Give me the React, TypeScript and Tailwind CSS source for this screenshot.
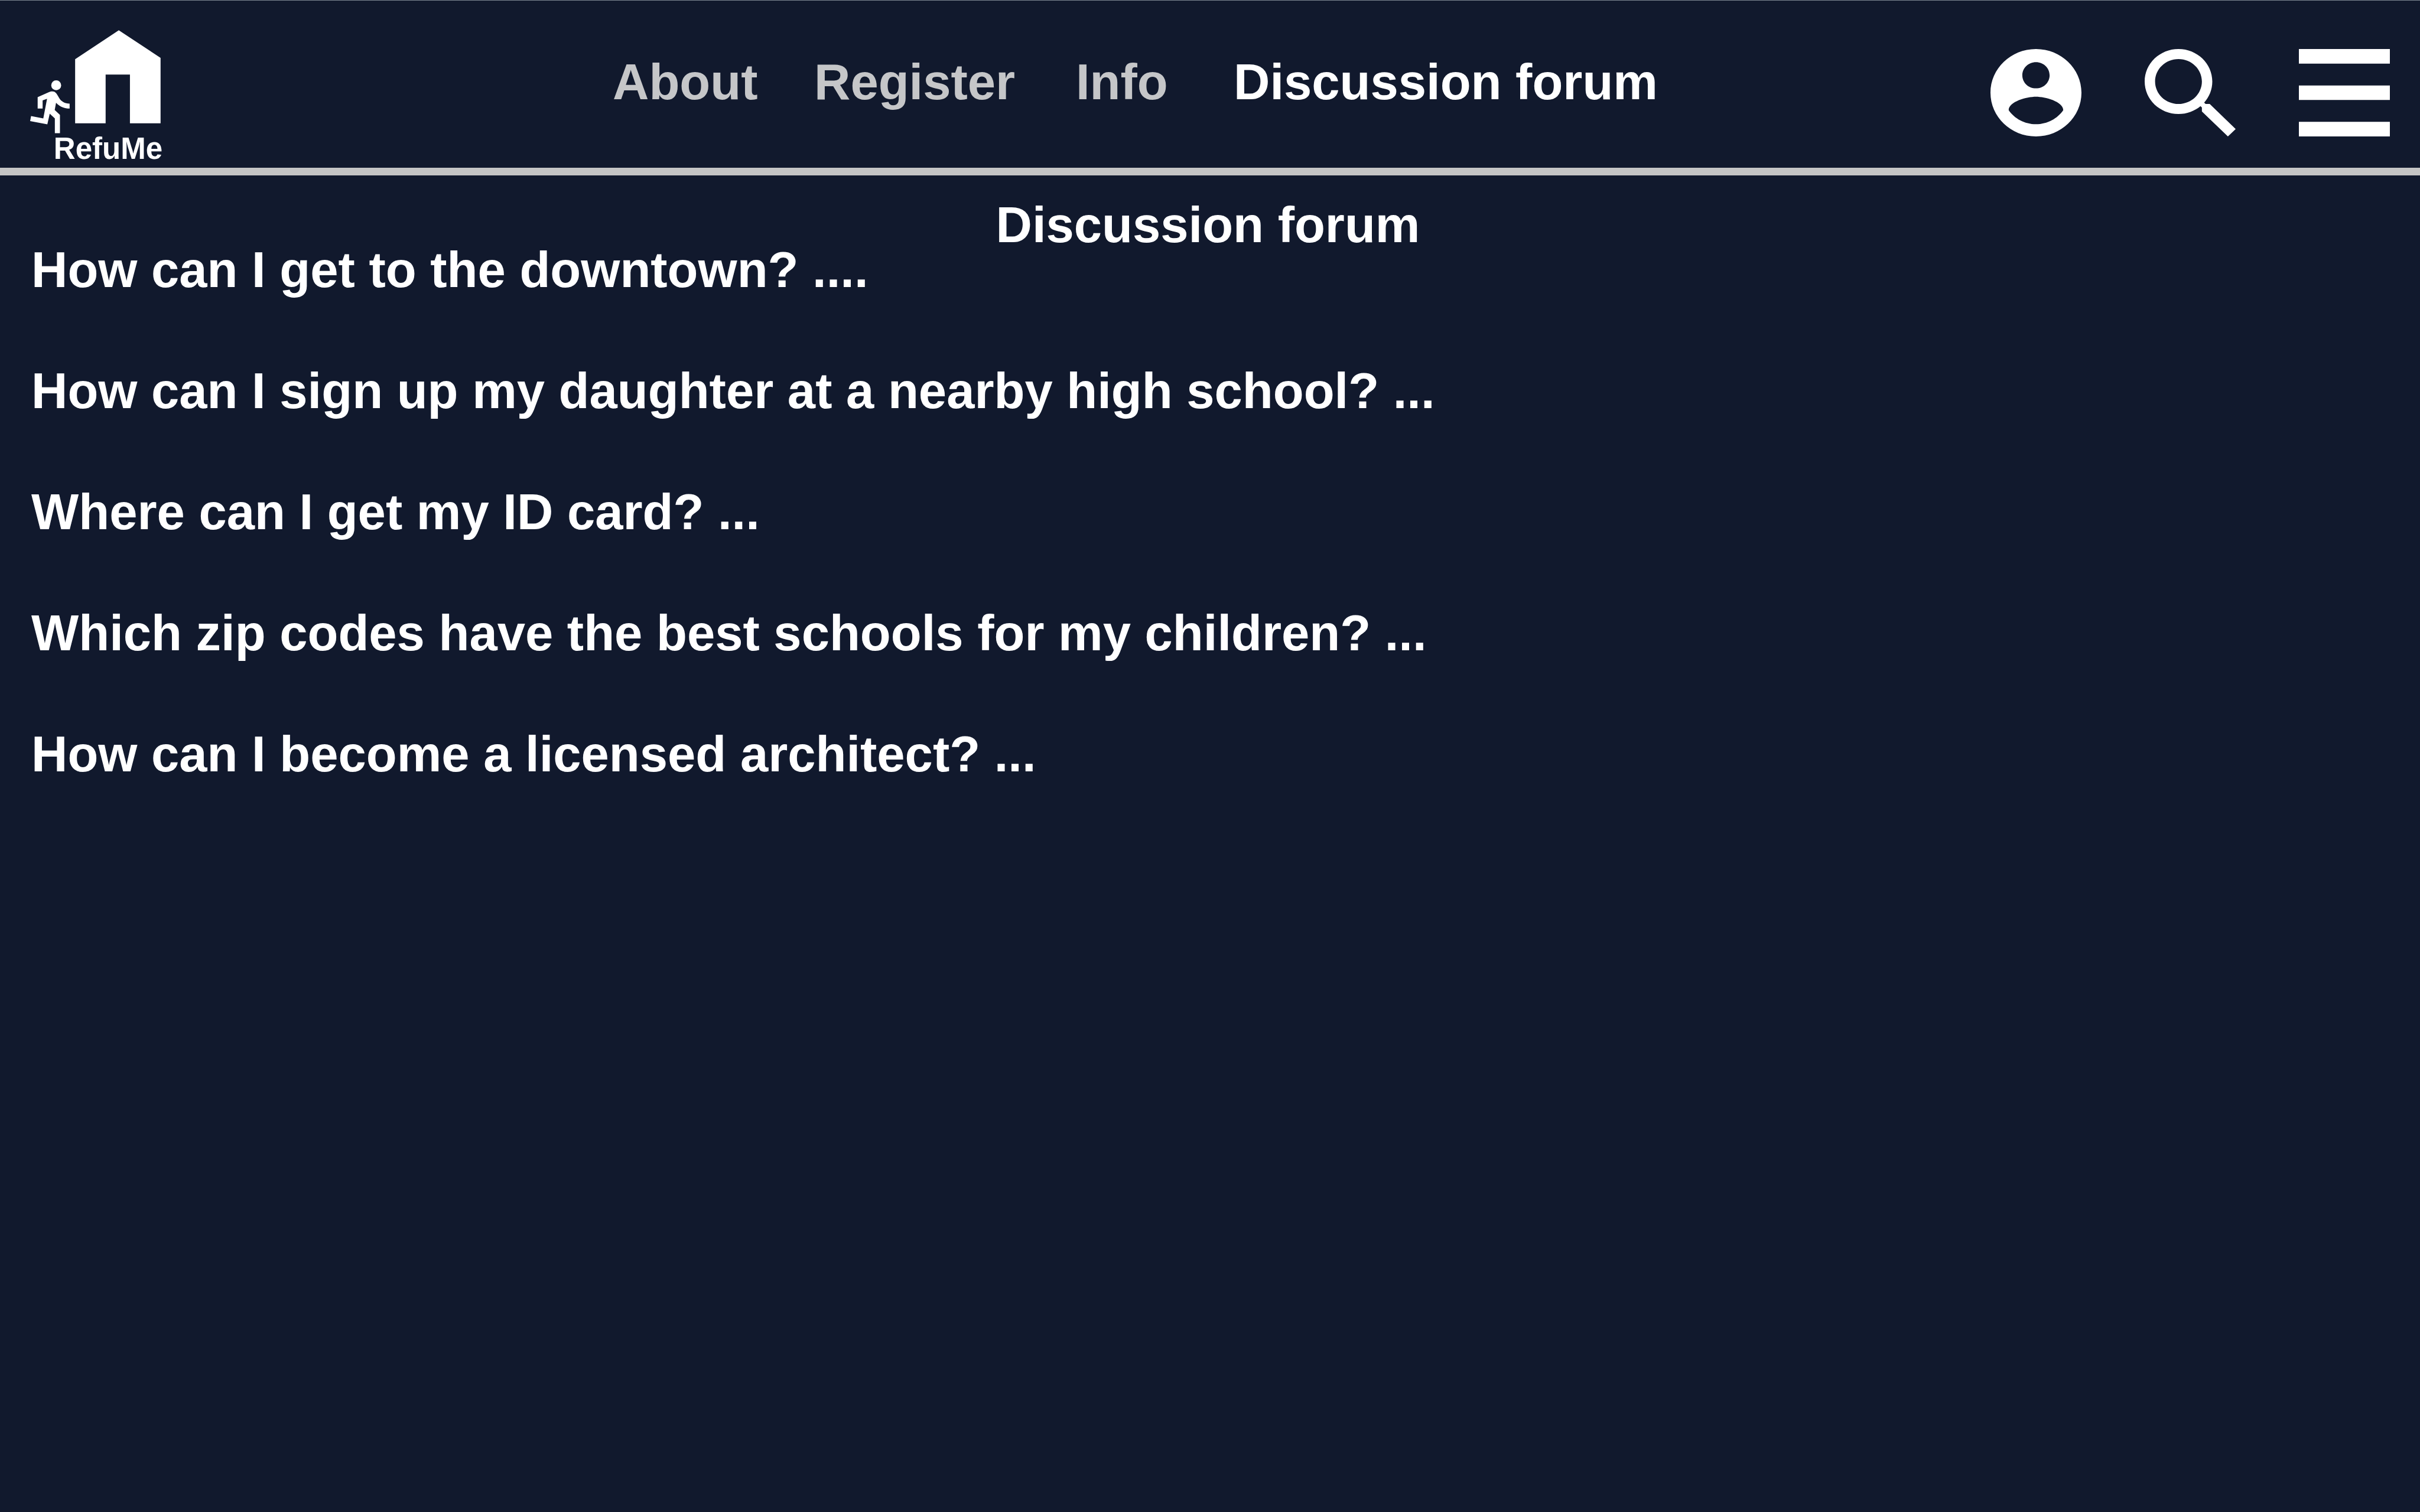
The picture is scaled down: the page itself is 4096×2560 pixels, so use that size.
const navItems = [
  { label: "About", active: false },
  { label: "Register", active: false },
  { label: "Info", active: false },
  { label: "Discussion forum", active: true },
];

const questions = [
  "How can I get to the downtown? ....",
  "How can I sign up my daughter at a nearby high school? ...",
  "Where can I get my ID card? ...",
  "Which zip codes have the best schools for my children? ...",
  "How can I become a licensed architect? ...",
];

const actions = [
  {
    label: "Account",
    viewBox: "2 2 20 20",
    path: "M12 2C6.48 2 2 6.48 2 12s4.48 10 10 10 10-4.48 10-10S17.52 2 12 2zm0 3c1.66 0 3 1.34 3 3s-1.34 3-3 3-3-1.34-3-3 1.34-3 3-3zm0 14.2c-2.5 0-4.71-1.28-6-3.22.03-1.99 4-3.08 6-3.08 1.99 0 5.97 1.09 6 3.08-1.29 1.94-3.5 3.22-6 3.22z",
  },
  {
    label: "Search",
    viewBox: "3 3 17.49 17.49",
    path: "M15.5 14h-.79l-.28-.27C15.41 12.59 16 11.11 16 9.5 16 5.91 13.09 3 9.5 3S3 5.91 3 9.5 5.91 16 9.5 16c1.61 0 3.09-.59 4.23-1.57l.27.28v.79l5 4.99L20.49 19l-4.99-5zm-6 0C7.01 14 5 11.99 5 9.5S7.01 5 9.5 5 14 7.01 14 9.5 11.99 14 9.5 14z",
  },
  {
    label: "Menu",
    viewBox: "0 0 18 12",
    path: "M0 0h18v2H0zM0 5h18v2H0zM0 10h18v2H0z",
  },
];

function Logo() {
  return (
    <a href="#home" className="flex w-[224px] shrink-0 flex-col text-white">
      <svg viewBox="225 225 972 768" className="h-[175px] w-[221px]" fill="currentColor" aria-hidden="true">
        <path d="M885 225 1196 431V918H968V555H787V918H560V441Z" />
        <circle cx="419" cy="635" r="37" />
        <path d="M281 723 365 686C378 680 396 679 405 683C418 689 426 704 440 728C455 755 483 772 519 772V808C480 808 448 796 418 765L408 819 447 855V992H409V882L371 846 353 926 225 901 232 864 323 882 351 735 318 747V808H281Z" />
      </svg>
      <span className="mt-[2px] text-right text-[51px] leading-[48px]">RefuMe</span>
    </a>
  );
}

export default function App() {
  return (
    <div className="min-h-screen bg-[#11192d] font-['Liberation_Sans',Arial,sans-serif] text-[85px] font-bold text-white">
      <header className="flex items-start border-t border-b-[13px] border-t-[#7c8590] border-b-[#c5c5c5] px-[51px] pt-[50px] pb-[8px]">
        <Logo />
        <nav
          aria-label="Main"
          className="mt-[37px] ml-[762px] grid grid-cols-[341px_443px_267px_auto] leading-[102px] whitespace-nowrap"
        >
          {navItems.map((item) => (
            <a
              key={item.label}
              href="#"
              aria-current={item.active ? "page" : undefined}
              className={item.active ? "text-white" : "text-[#c5c6c8]"}
            >
              {item.label}
            </a>
          ))}
        </nav>
        <div className="mt-[32px] ml-auto flex gap-[107px]">
          {actions.map((action) => (
            <button key={action.label} type="button" aria-label={action.label}>
              <svg
                viewBox={action.viewBox}
                preserveAspectRatio="none"
                className="h-[148px] w-[154px]"
                fill="currentColor"
                aria-hidden="true"
              >
                <path d={action.path} />
              </svg>
            </button>
          ))}
        </div>
      </header>

      <main className="pt-[46px] pr-[60px] pl-[53px] leading-[76px]">
        <h1 className="text-center">Discussion forum</h1>
        <ul className="flex flex-col gap-[129px]">
          {questions.map((question) => (
            <li key={question}>
              <a href="#">{question}</a>
            </li>
          ))}
        </ul>
      </main>
    </div>
  );
}
